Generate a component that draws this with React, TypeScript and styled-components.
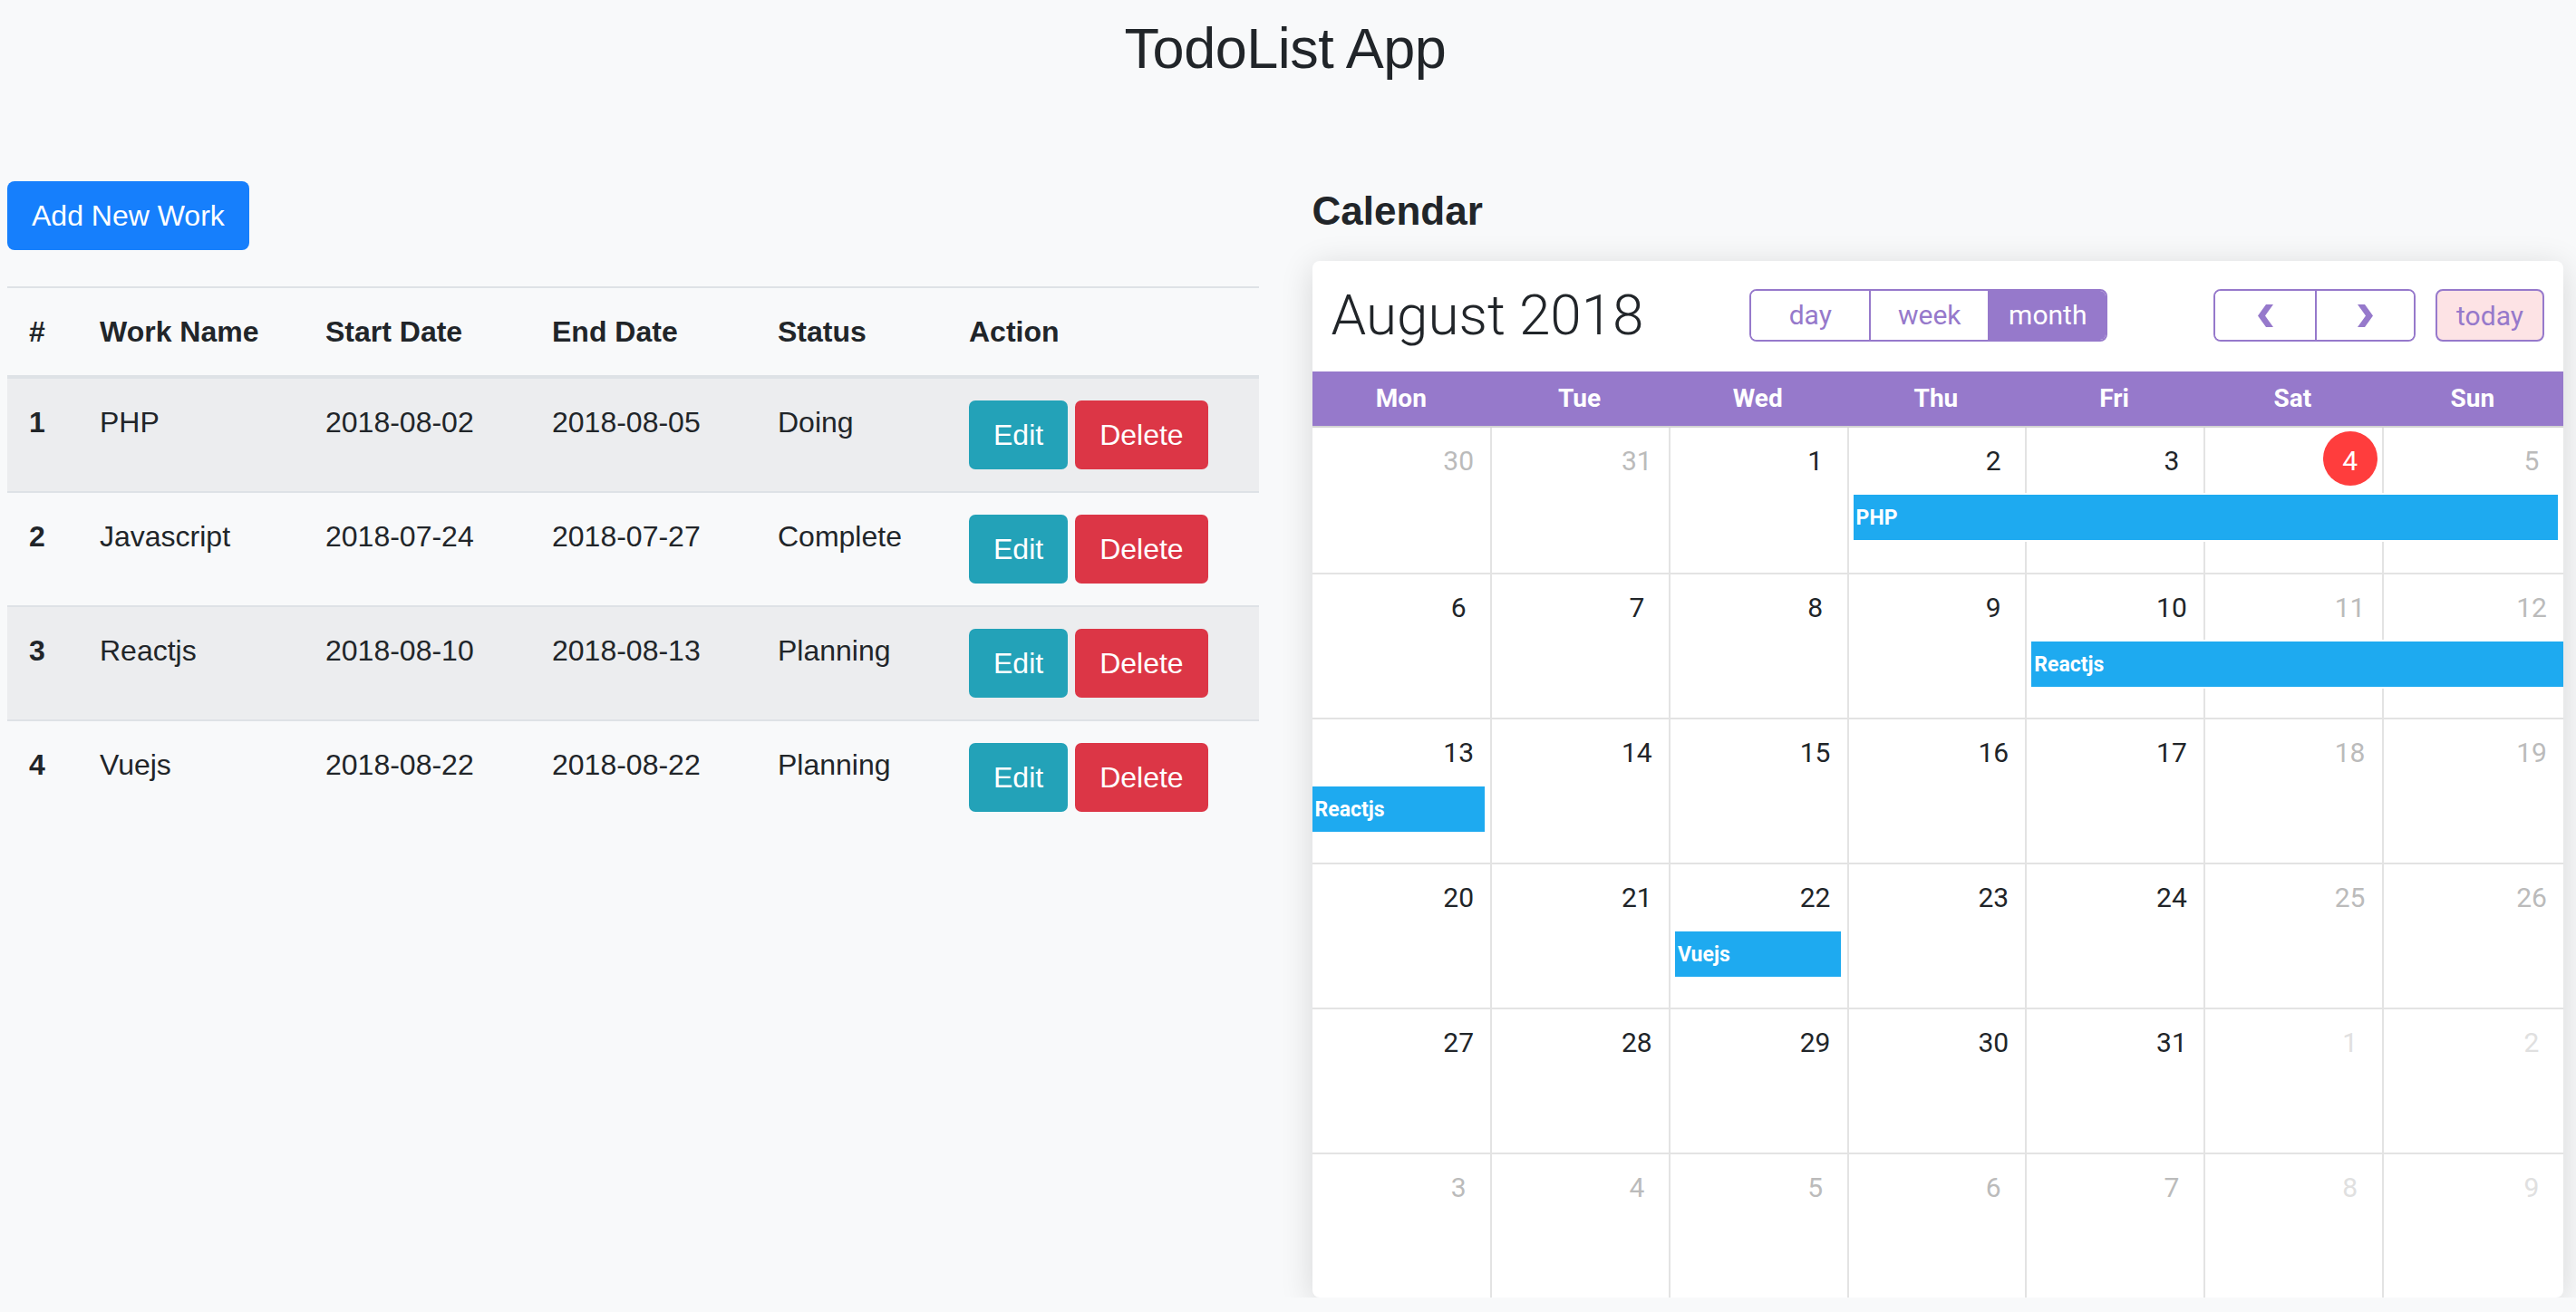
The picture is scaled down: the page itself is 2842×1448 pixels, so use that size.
import React from 'react';
import styled, { createGlobalStyle } from 'styled-components';

const GlobalStyle = createGlobalStyle`
  html, body {
    margin: 0;
    padding: 0;
    background: #f8f9fa;
  }
  body {
    font-family: "Liberation Sans", Arial, Helvetica, sans-serif;
    color: #212529;
  }
  *, *::before, *::after { box-sizing: border-box; }
`;

const PURPLE = '#9679cb';
const GRID_COLS = 'repeat(6, 196.7px) 1fr';

const Page = styled.div`
  padding: 16px 14px 0 8px;
`;

const Title = styled.h1`
  margin: 0 0 110px;
  text-align: center;
  font-size: 63px;
  font-weight: 400;
  line-height: 74px;
  letter-spacing: -0.5px;
`;

const Columns = styled.div`
  display: grid;
  grid-template-columns: 1fr 1fr;
  column-gap: 59px;
  align-items: start;
`;

const Section = styled.section`
  display: flex;
  flex-direction: column;
  align-items: stretch;
  min-width: 0;
`;

const Btn = styled.button<{ $variant: 'primary' | 'info' | 'danger' }>`
  border: none;
  border-radius: 7px;
  padding: 14px 27px;
  font-family: inherit;
  font-size: 32px;
  line-height: 48px;
  color: #fff;
  cursor: pointer;
  background: ${(p) =>
    p.$variant === 'primary' ? '#167ffc' : p.$variant === 'info' ? '#23a2b8' : '#dc3646'};
`;

const AddButton = styled(Btn)`
  align-self: flex-start;
  border-radius: 8px;
`;

const Table = styled.table`
  width: 100%;
  margin-top: 40px;
  border-collapse: collapse;
  table-layout: fixed;
  font-size: 32px;
  line-height: 48px;
`;

const Th = styled.th<{ $w?: number }>`
  width: ${(p) => (p.$w ? `${p.$w}px` : 'auto')};
  text-align: left;
  font-weight: 700;
  padding: 24px;
  vertical-align: bottom;
  border-top: 2px solid #dee2e6;
  border-bottom: 4px solid #dee2e6;
`;

const Tr = styled.tr<{ $striped: boolean }>`
  background: ${(p) => (p.$striped ? '#ecedef' : 'transparent')};
`;

const Td = styled.td<{ $bold?: boolean }>`
  padding: 24px;
  vertical-align: top;
  border-top: 2px solid #dee2e6;
  font-weight: ${(p) => (p.$bold ? 700 : 400)};
`;

const Actions = styled.div`
  display: flex;
  gap: 8px;
`;

const Heading = styled.h3`
  margin: 6px 0 29px;
  font-size: 44px;
  font-weight: 700;
  line-height: 53px;
`;

const Card = styled.div`
  background: #fff;
  border-radius: 8px;
  box-shadow: 0 6px 36px rgba(0, 0, 0, 0.14);
  overflow: hidden;
  font-family: Roboto, "Liberation Sans", sans-serif;
`;

const Toolbar = styled.div`
  display: flex;
  align-items: center;
  padding: 31px 21px 33px;
`;

const MonthTitle = styled.h2`
  margin: 0;
  font-size: 62px;
  font-weight: 300;
  line-height: 58px;
  color: #212529;
  white-space: nowrap;
`;

const CenterArea = styled.div`
  flex: 1;
  display: flex;
  justify-content: center;
`;

const RightArea = styled.div`
  display: flex;
  gap: 22px;
`;

const BtnGroup = styled.div`
  display: flex;
  border: 2px solid ${PURPLE};
  border-radius: 8px;
  overflow: hidden;
`;

const GroupBtn = styled.button<{ $active?: boolean; $w: number }>`
  width: ${(p) => p.$w}px;
  height: 54px;
  border: none;
  border-left: 2px solid ${PURPLE};
  &:first-child { border-left: none; }
  background: ${(p) => (p.$active ? PURPLE : '#fff')};
  color: ${(p) => (p.$active ? '#fff' : PURPLE)};
  font-family: Roboto, sans-serif;
  font-size: 30px;
  line-height: 54px;
  padding: 0;
  display: flex;
  align-items: center;
  justify-content: center;
`;

const TodayBtn = styled.button`
  width: 120px;
  height: 58px;
  border: 2px solid ${PURPLE};
  border-radius: 8px;
  background: #fde3e5;
  color: ${PURPLE};
  font-family: Roboto, sans-serif;
  font-size: 30px;
  padding: 0;
`;

const DayHeader = styled.div`
  display: grid;
  grid-template-columns: ${GRID_COLS};
  height: 62px;
  background: ${PURPLE};
  border-bottom: 2px solid #d3d3d3;
`;

const DayName = styled.div`
  text-align: center;
  color: #fff;
  font-weight: 700;
  font-size: 28px;
  line-height: 60px;
`;

const Week = styled.div<{ $first: boolean }>`
  display: grid;
  grid-template-columns: ${GRID_COLS};
  grid-template-rows: 74px 50px 1fr;
  height: 160px;
  border-top: ${(p) => (p.$first ? 'none' : '2px solid #e3e3e3')};
`;

const DayCell = styled.div<{ $col: number }>`
  grid-row: 1 / -1;
  grid-column: ${(p) => p.$col};
  border-left: ${(p) => (p.$col === 1 ? 'none' : '2px solid #e3e3e3')};
  display: flex;
  justify-content: flex-end;
  align-items: flex-start;
`;

type Tone = 'normal' | 'muted' | 'faint';

const DayNum = styled.div<{ $tone: Tone; $today?: boolean }>`
  width: 60px;
  height: 60px;
  margin: 4px 5px 0 0;
  border-radius: 50%;
  text-align: center;
  font-size: 30px;
  line-height: 66px;
  background: ${(p) => (p.$today ? '#ff3d3d' : 'transparent')};
  color: ${(p) =>
    p.$today ? '#fff' : p.$tone === 'normal' ? '#212529' : p.$tone === 'muted' ? '#bbbbbb' : '#e0e0e0'};
`;

const Event = styled.div<{ $start: number; $span: number; $ml: number; $mr: number }>`
  grid-row: 2;
  grid-column: ${(p) => p.$start} / span ${(p) => p.$span};
  margin-left: ${(p) => p.$ml}px;
  margin-right: ${(p) => p.$mr}px;
  z-index: 1;
  background: #1eaaf0;
  color: #fff;
  font-weight: 700;
  font-size: 23px;
  padding-left: 3px;
  display: flex;
  align-items: center;
  box-shadow: 0 0 0 2px #fff;
`;

const Chevron = ({ dir }: { dir: 'left' | 'right' }) => (
  <svg width="17" height="25" viewBox="0 0 17 25" fill={PURPLE}>
    {dir === 'left' ? (
      <polygon points="17,0 9,0 0,12.5 9,25 17,25 8,12.5" />
    ) : (
      <polygon points="0,0 8,0 17,12.5 8,25 0,25 9,12.5" />
    )}
  </svg>
);

const works = [
  { id: 1, name: 'PHP', start: '2018-08-02', end: '2018-08-05', status: 'Doing' },
  { id: 2, name: 'Javascript', start: '2018-07-24', end: '2018-07-27', status: 'Complete' },
  { id: 3, name: 'Reactjs', start: '2018-08-10', end: '2018-08-13', status: 'Planning' },
  { id: 4, name: 'Vuejs', start: '2018-08-22', end: '2018-08-22', status: 'Planning' },
];

const weekEvents: { title: string; start: number; span: number; ml: number; mr: number }[][] = [
  [{ title: 'PHP', start: 4, span: 4, ml: 7, mr: 6 }],
  [{ title: 'Reactjs', start: 5, span: 3, ml: 7, mr: 0 }],
  [{ title: 'Reactjs', start: 1, span: 1, ml: 0, mr: 6 }],
  [{ title: 'Vuejs', start: 3, span: 1, ml: 7, mr: 7 }],
  [],
  [],
];

const dayNames = ['Mon', 'Tue', 'Wed', 'Thu', 'Fri', 'Sat', 'Sun'];

function buildWeeks() {
  const weeks: { day: number; tone: Tone; today: boolean }[][] = [];
  const d = new Date(2018, 6, 30);
  for (let w = 0; w < 6; w++) {
    const row: { day: number; tone: Tone; today: boolean }[] = [];
    for (let i = 0; i < 7; i++) {
      const inMonth = d.getMonth() === 7;
      const weekend = i >= 5;
      let tone: Tone = 'normal';
      if (!inMonth && weekend) tone = 'faint';
      else if (!inMonth || weekend) tone = 'muted';
      row.push({ day: d.getDate(), tone, today: inMonth && d.getDate() === 4 });
      d.setDate(d.getDate() + 1);
    }
    weeks.push(row);
  }
  return weeks;
}

export default function App() {
  const weeks = buildWeeks();
  return (
    <Page>
      <GlobalStyle />
      <Title>TodoList App</Title>
      <Columns>
        <Section>
          <AddButton $variant="primary">Add New Work</AddButton>
          <Table>
            <thead>
              <tr>
                <Th $w={78}>#</Th>
                <Th $w={249}>Work Name</Th>
                <Th $w={250}>Start Date</Th>
                <Th $w={249}>End Date</Th>
                <Th $w={211}>Status</Th>
                <Th>Action</Th>
              </tr>
            </thead>
            <tbody>
              {works.map((w, i) => (
                <Tr key={w.id} $striped={i % 2 === 0}>
                  <Td $bold>{w.id}</Td>
                  <Td>{w.name}</Td>
                  <Td>{w.start}</Td>
                  <Td>{w.end}</Td>
                  <Td>{w.status}</Td>
                  <Td>
                    <Actions>
                      <Btn $variant="info">Edit</Btn>
                      <Btn $variant="danger">Delete</Btn>
                    </Actions>
                  </Td>
                </Tr>
              ))}
            </tbody>
          </Table>
        </Section>
        <Section>
          <Heading>Calendar</Heading>
          <Card>
            <Toolbar>
              <MonthTitle>August 2018</MonthTitle>
              <CenterArea>
                <BtnGroup>
                  <GroupBtn $w={130}>day</GroupBtn>
                  <GroupBtn $w={131}>week</GroupBtn>
                  <GroupBtn $w={130} $active>month</GroupBtn>
                </BtnGroup>
              </CenterArea>
              <RightArea>
                <BtnGroup>
                  <GroupBtn $w={110}><Chevron dir="left" /></GroupBtn>
                  <GroupBtn $w={109}><Chevron dir="right" /></GroupBtn>
                </BtnGroup>
                <TodayBtn>today</TodayBtn>
              </RightArea>
            </Toolbar>
            <DayHeader>
              {dayNames.map((n) => (
                <DayName key={n}>{n}</DayName>
              ))}
            </DayHeader>
            {weeks.map((row, wi) => (
              <Week key={wi} $first={wi === 0}>
                {row.map((c, ci) => (
                  <DayCell key={ci} $col={ci + 1}>
                    <DayNum $tone={c.tone} $today={c.today}>{c.day}</DayNum>
                  </DayCell>
                ))}
                {weekEvents[wi].map((e, ei) => (
                  <Event key={ei} $start={e.start} $span={e.span} $ml={e.ml} $mr={e.mr}>
                    {e.title}
                  </Event>
                ))}
              </Week>
            ))}
          </Card>
        </Section>
      </Columns>
    </Page>
  );
}
